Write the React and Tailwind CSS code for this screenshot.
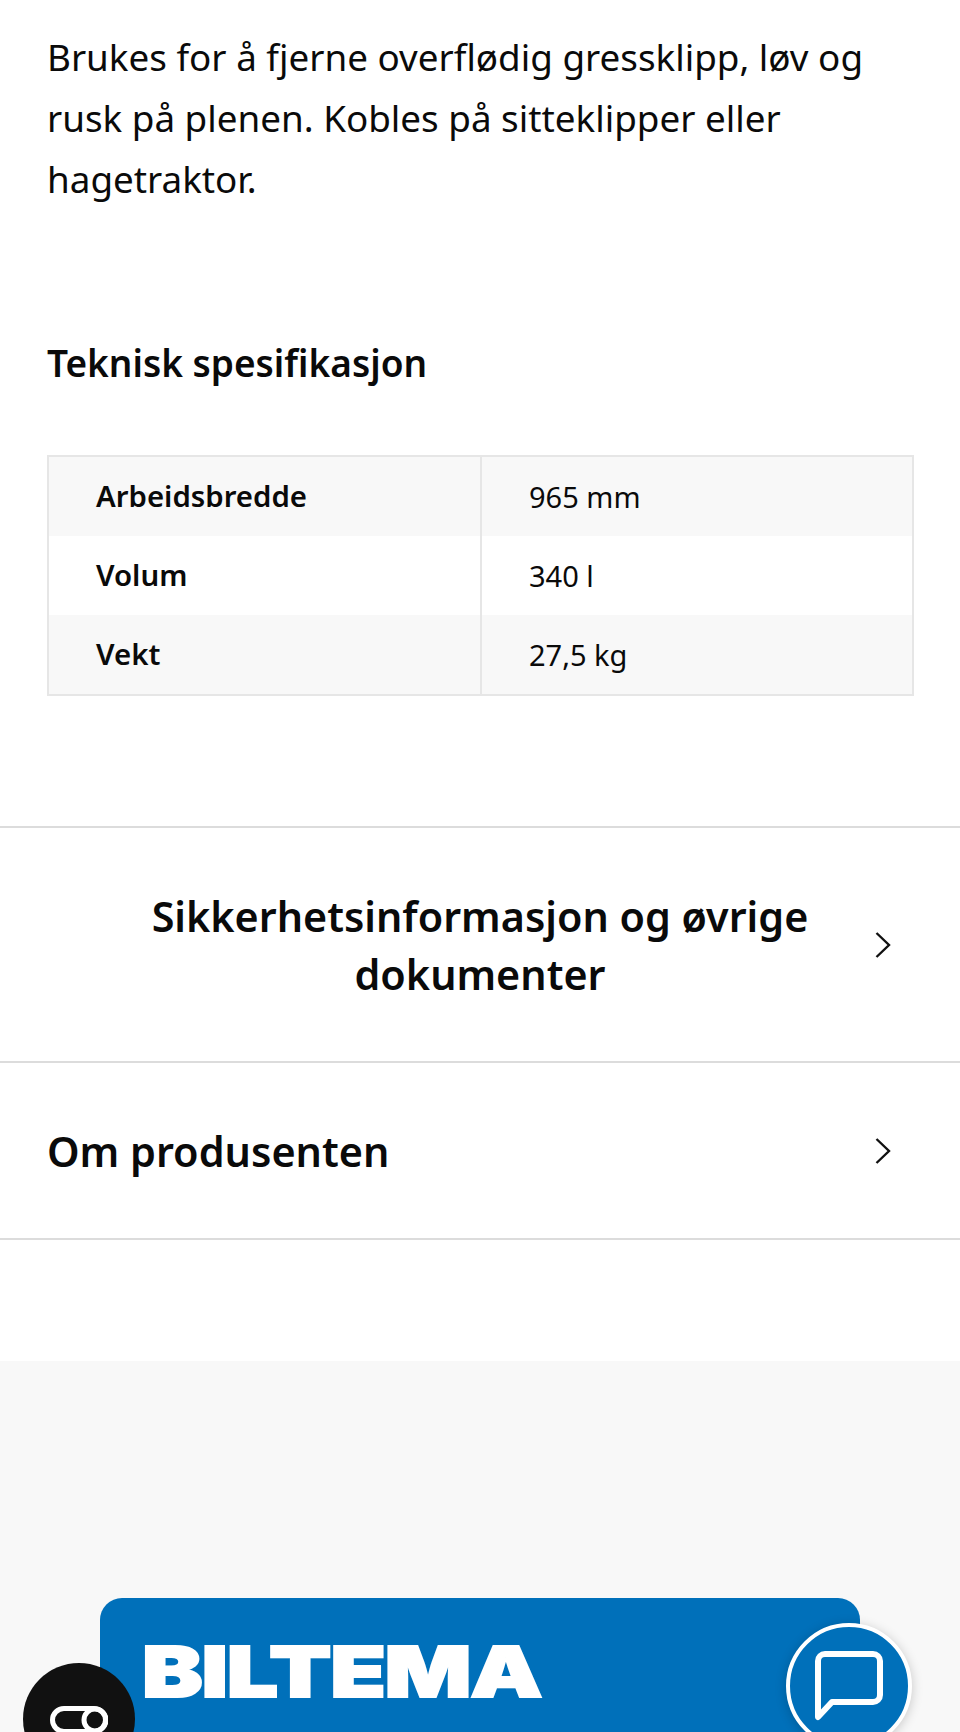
const font = "font-['Noto_Sans','Open_Sans',sans-serif]";

const specs = [
  { label: "Arbeidsbredde", value: "965 mm" },
  { label: "Volum", value: "340 l" },
  { label: "Vekt", value: "27,5 kg" },
];

function Chevron() {
  return (
    <svg width="18" height="28" viewBox="0 0 18 28" fill="none" stroke="#111" strokeWidth="2.4" className="shrink-0">
      <path d="M2.5 2 L15 14 L2.5 26" />
    </svg>
  );
}

export default function App() {
  return (
    <div className={`relative h-[1732px] overflow-hidden bg-white text-[#0a0a0a] ${font}`}>
      <p className="pl-[47px] pr-[40px] pt-[27px] text-[36.8px] leading-[61px]">
        Brukes for å fjerne overflødig gressklipp, løv og rusk på plenen. Kobles på sitteklipper eller hagetraktor.
      </p>

      <h2 className="mt-[123px] px-[47px] text-[37px] font-semibold leading-[60px]">Teknisk spesifikasjon</h2>

      <div className="ml-[47px] mr-[46px] mt-[62px] border-2 border-[#e6e6e6]">
        {specs.map((row, i) => (
          <div key={row.label} className={`grid h-[79px] grid-cols-[433px_1fr] ${i % 2 === 0 ? "bg-[#f8f8f8]" : "bg-white"}`}>
            <div className="flex items-center border-r-2 border-[#e6e6e6] pl-[47px] text-[29.4px] font-semibold">{row.label}</div>
            <div className="flex items-center pl-[47px] text-[29px]">{row.value}</div>
          </div>
        ))}
      </div>

      <div className="mt-[130px] border-y-2 border-[#dcdcdc]">
        <div className="flex h-[233px] items-center pl-[86px] pr-[68px]">
          <h3 className="flex-1 text-center text-[41.3px] font-semibold leading-[58px]">
            Sikkerhetsinformasjon og øvrige
            <br />
            dokumenter
          </h3>
          <Chevron />
        </div>
      </div>
      <div className="border-b-2 border-[#dcdcdc]">
        <div className="flex h-[175px] items-center justify-between pl-[47px] pr-[68px]">
          <h3 className="text-[41.4px] font-semibold leading-[58px]">Om produsenten</h3>
          <Chevron />
        </div>
      </div>

      <div className="mt-[121px] h-[400px] bg-[#f8f8f8] px-[100px] pt-[237px]">
        <div className="h-[300px] rounded-t-[22px] bg-[#0070ba] pl-[42px] pt-[30px]">
          <span className="block origin-left scale-x-[1.3] font-['Inter',sans-serif] text-[70px] font-black leading-[88px] tracking-[-1px] text-white [-webkit-text-stroke:2px_white]">
            BILTEMA
          </span>
        </div>
      </div>

      <div className="absolute left-[23px] top-[1663px] flex h-[112px] w-[112px] items-start justify-center rounded-full bg-[#111] pt-[43px]">
        <svg width="58" height="28" viewBox="0 0 58 28" fill="none" stroke="white" strokeWidth="5">
          <rect x="2.5" y="2.5" width="53" height="23" rx="11.5" />
          <circle cx="45" cy="14" r="11" />
        </svg>
      </div>

      <div className="absolute left-[786px] top-[1623px] flex h-[126px] w-[126px] items-center justify-center rounded-full border-[4px] border-white bg-[#0070ba] shadow-[0_2px_12px_rgba(0,0,0,0.2)]">
        <svg width="68" height="70" viewBox="0 0 68 70" fill="none" stroke="white" strokeWidth="6" strokeLinejoin="round">
          <path d="M3 10 a7 7 0 0 1 7 -7 h48 a7 7 0 0 1 7 7 v34 a7 7 0 0 1 -7 7 H17 L3 66 Z" />
        </svg>
      </div>
    </div>
  );
}
